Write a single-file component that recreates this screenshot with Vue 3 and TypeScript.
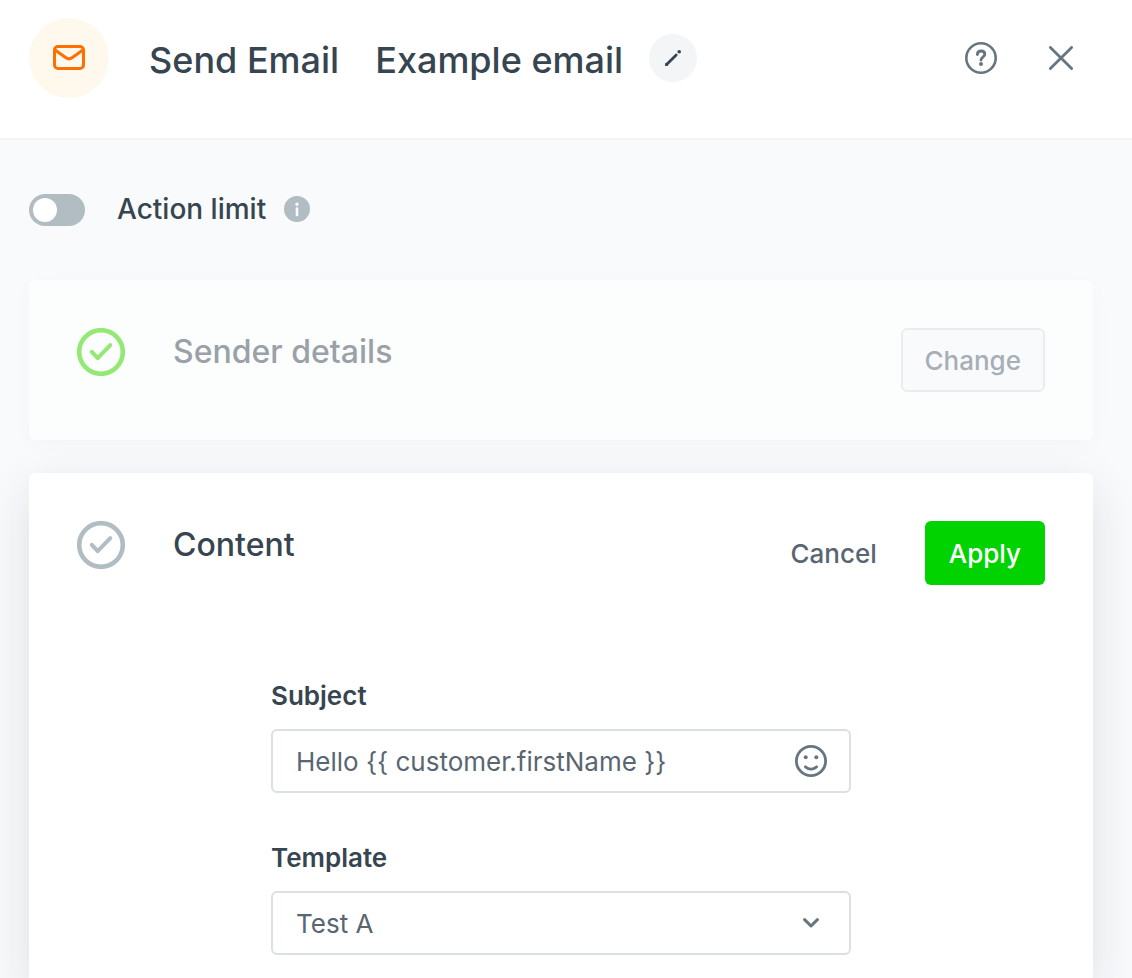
<script setup lang="ts">
import { ref } from 'vue'

const actionLimit = ref(false)
const subject = ref('Hello {{ customer.firstName }}')
const template = ref('Test A')
const templates: string[] = ['Test A', 'Test B']
</script>

<template>
  <div class="panel">
    <header class="header">
      <span class="badge">
        <svg width="32" height="26" viewBox="0 0 32 26" fill="none" stroke="currentColor" stroke-width="3" stroke-linejoin="round" aria-hidden="true">
          <rect x="1.5" y="1.5" width="29" height="22" rx="3.5" />
          <path d="M2 5 13 12.8Q16 14.9 19 12.8L30 5" />
        </svg>
      </span>
      <h1 class="title">Send Email</h1>
      <h2 class="title name">Example email</h2>
      <button type="button" class="edit" aria-label="Edit name">
        <svg width="18" height="18" viewBox="0 0 18 18" fill="none" stroke="currentColor" aria-hidden="true">
          <path d="M2.6 15.4 12.2 6" stroke-width="2.8" stroke-linecap="round" />
          <path d="M1.2 13.8V16.9H4.3Z" fill="currentColor" stroke="none" />
          <circle cx="15.2" cy="2.8" r="1.8" fill="currentColor" stroke="none" />
        </svg>
      </button>
      <div class="tools">
        <button type="button" class="icon-button" aria-label="Help">
          <svg width="32" height="32" viewBox="0 0 32 32" fill="none" stroke="currentColor" aria-hidden="true">
            <circle cx="16" cy="16" r="14.7" stroke-width="2.6" />
            <path d="M12.4 12.5C12.4 10.3 14 9 16.2 9C18.3 9 19.8 10.3 19.8 12.3C19.8 15.2 16 15.1 16 18" stroke-width="2.9" stroke-linecap="round" />
            <circle cx="16" cy="22" r="2" fill="currentColor" stroke="none" />
          </svg>
        </button>
        <button type="button" class="icon-button" aria-label="Close">
          <svg width="24" height="24" viewBox="0 0 24 24" fill="none" stroke="currentColor" stroke-width="2.8" stroke-linecap="round" aria-hidden="true">
            <path d="M1.4 1.4 22.6 22.6M22.6 1.4 1.4 22.6" />
          </svg>
        </button>
      </div>
    </header>

    <main class="body">
      <div class="limit">
        <input id="action-limit" v-model="actionLimit" type="checkbox" role="switch" class="switch" />
        <div class="limit-text">
          <label for="action-limit" class="limit-label">Action limit</label>
          <svg width="26" height="26" viewBox="0 0 26 26" aria-hidden="true">
            <circle cx="13" cy="13" r="13" fill="#b1bcc3" />
            <circle cx="13" cy="8.2" r="1.7" fill="#f9fafc" />
            <path d="M13 12.6V19" stroke="#f9fafc" stroke-width="2.6" stroke-linecap="round" />
          </svg>
        </div>
      </div>

      <section class="card muted">
        <div class="card-head">
          <svg class="check done" width="48" height="48" viewBox="0 0 48 48" fill="none" stroke="currentColor" aria-hidden="true">
            <circle cx="24" cy="24" r="21.8" stroke-width="4.6" />
            <path d="M14.8 23.8 20.7 30.2 33.3 17.1" stroke-width="4" stroke-linecap="round" stroke-linejoin="round" />
          </svg>
          <h3 class="card-title">Sender details</h3>
          <button type="button" class="button change">Change</button>
        </div>
      </section>

      <section class="card active">
        <div class="card-head">
          <svg class="check" width="48" height="48" viewBox="0 0 48 48" fill="none" stroke="currentColor" aria-hidden="true">
            <circle cx="24" cy="24" r="21.8" stroke-width="4.6" />
            <path d="M14.8 23.8 20.7 30.2 33.3 17.1" stroke-width="4" stroke-linecap="round" stroke-linejoin="round" />
          </svg>
          <h3 class="card-title">Content</h3>
          <button type="button" class="button cancel">Cancel</button>
          <button type="button" class="button apply">Apply</button>
        </div>

        <form class="form" @submit.prevent>
          <div class="field">
            <label for="subject">Subject</label>
            <div class="control">
              <input id="subject" v-model="subject" type="text" />
              <button type="button" class="icon-button" aria-label="Insert emoji">
                <svg width="32" height="32" viewBox="0 0 32 32" fill="none" stroke="currentColor" aria-hidden="true">
                  <circle cx="16" cy="16" r="14.6" stroke-width="2.8" />
                  <circle cx="10.7" cy="12.3" r="2" fill="currentColor" stroke="none" />
                  <circle cx="21.3" cy="12.3" r="2" fill="currentColor" stroke="none" />
                  <path d="M10.4 21.8Q16 26.4 21.6 21.8" stroke-width="2.8" stroke-linecap="round" />
                </svg>
              </button>
            </div>
          </div>
          <div class="field">
            <label for="template">Template</label>
            <div class="control">
              <select id="template" v-model="template">
                <option v-for="item in templates" :key="item" :value="item">{{ item }}</option>
              </select>
              <svg class="chevron" width="16" height="10" viewBox="0 0 16 10" fill="none" stroke="currentColor" stroke-width="3" stroke-linecap="round" stroke-linejoin="round" aria-hidden="true">
                <path d="M1.6 1.6 8 8 14.4 1.6" />
              </svg>
            </div>
          </div>
        </form>
      </section>
    </main>
  </div>
</template>

<style>
body {
  margin: 0;
}
</style>

<style scoped>
.panel {
  display: flex;
  flex-direction: column;
  min-height: 100vh;
  overflow: hidden;
  background: #f9fafc;
  color: #36454f;
  font-family: Inter, "Liberation Sans", sans-serif;
}
.panel *,
.panel {
  box-sizing: border-box;
}
h1,
h2,
h3 {
  margin: 0;
}
button,
input,
select {
  margin: 0;
  padding: 0;
  border: 0;
  background: none;
  color: inherit;
  font: inherit;
}
button {
  cursor: pointer;
}
svg {
  display: block;
  flex: none;
}
.header {
  display: flex;
  align-items: center;
  padding: 18px 59px 40px 29px;
  border-bottom: 2px solid #f2f4f6;
  background: #fff;
}
.badge {
  display: grid;
  flex: none;
  place-items: center;
  width: 80px;
  height: 80px;
  margin-right: 40px;
  border-radius: 50%;
  background: #fff9ed;
  color: #ff6f00;
}
.title {
  padding-top: 3px;
  font-size: 36px;
  font-weight: 500;
  line-height: 48px;
  white-space: nowrap;
}
.name {
  margin-left: 36px;
}
.edit {
  display: grid;
  flex: none;
  place-items: center;
  width: 48px;
  height: 48px;
  margin-left: 26px;
  border-radius: 50%;
  background: #f3f5f7;
}
.tools {
  display: flex;
  align-items: center;
  gap: 52px;
  margin-left: auto;
}
.icon-button {
  display: grid;
  place-items: center;
  color: #667681;
}
.body {
  display: flex;
  flex: 1;
  flex-direction: column;
  padding: 54px 39px 0 29px;
}
.limit {
  display: flex;
  align-items: flex-start;
  gap: 32px;
  margin-bottom: 54px;
}
.switch {
  flex: none;
  width: 56px;
  height: 32px;
  padding: 4px;
  border-radius: 16px;
  background: #b1bcc3;
  appearance: none;
  cursor: pointer;
}
.switch::before {
  display: block;
  width: 24px;
  height: 24px;
  border-radius: 50%;
  background: #fff;
  content: "";
}
.switch:checked {
  padding-left: 28px;
  background: #00d300;
}
.limit-text {
  display: flex;
  align-items: center;
  gap: 18px;
}
.limit-label {
  font-size: 28px;
  font-weight: 500;
  line-height: 30px;
}
.card {
  padding: 48px;
  border-radius: 6px;
}
.muted {
  margin-bottom: 33px;
  background: #fcfefd;
  box-shadow: 0 6px 24px rgba(0, 0, 0, 0.025);
}
.muted .card-title {
  color: #9aa1a9;
}
.active {
  flex: 1;
  padding-bottom: 23px;
  border-radius: 6px 6px 0 0;
  background: #fff;
  box-shadow: 0 16px 48px rgba(20, 30, 40, 0.12);
}
.card-head {
  display: flex;
  align-items: flex-start;
}
.check {
  margin-right: 48px;
  color: #b1bcc3;
}
.done {
  color: #94e874;
}
.card-title {
  flex: 1;
  font-size: 32px;
  font-weight: 500;
  line-height: 48px;
}
.button {
  height: 64px;
  padding: 0 24px;
  border-radius: 6px;
  font-size: 26px;
  font-weight: 500;
}
.change {
  padding: 0 22px;
  border: 2px solid #ebecf0;
  background: #f9fafc;
  color: #a7afb6;
}
.cancel {
  color: #596672;
}
.apply {
  margin-left: 24px;
  background: #00d300;
  color: #fff;
}
.form {
  display: grid;
  gap: 49px;
  max-width: 580px;
  margin: 95px auto 0;
}
.field label {
  display: block;
  margin-bottom: 17px;
  font-size: 26px;
  font-weight: 600;
  line-height: 32px;
}
.control {
  display: flex;
  align-items: center;
  height: 64px;
  padding: 0 22px 0 23px;
  border: 2px solid #dae0e4;
  border-radius: 6px;
  background: #fff;
  color: #596672;
  font-size: 26px;
}
.control input,
.control select {
  flex: 1;
  min-width: 0;
  height: 60px;
  outline: none;
  appearance: none;
}
.chevron {
  margin-right: 8px;
  color: #667681;
}
</style>
